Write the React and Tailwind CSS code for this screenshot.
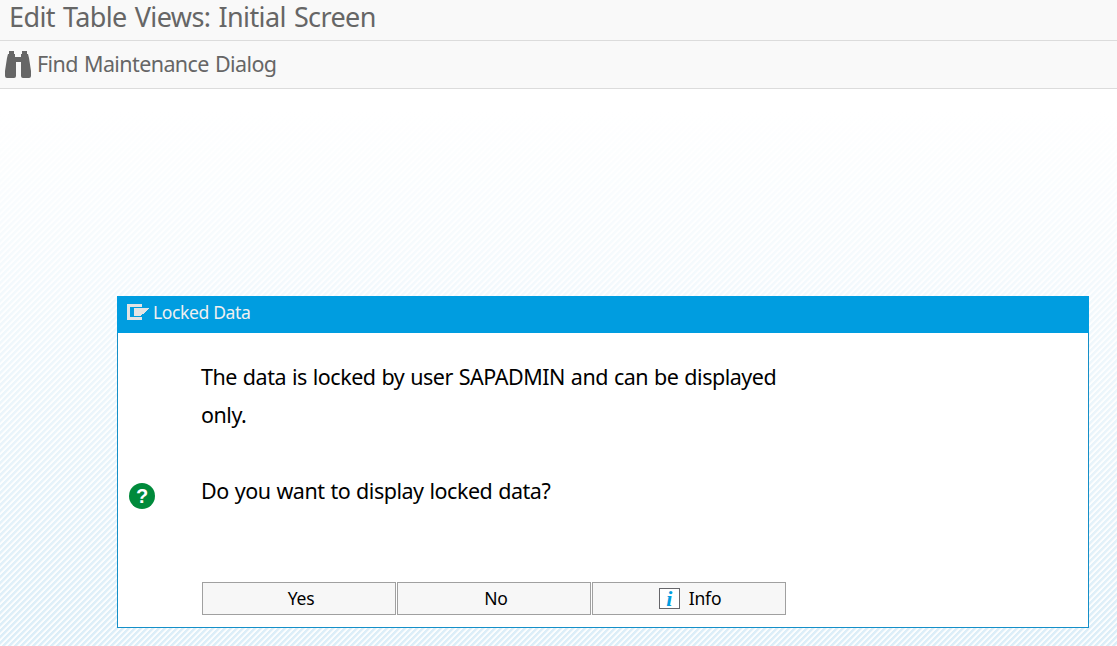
const STRIPES =
  "bg-[linear-gradient(to_bottom,#ffffff_110px,#ffffff00_640px),repeating-linear-gradient(135deg,#dceef8_0px,#dceef8_1.7px,#fbfdfe_2.4px,#fbfdfe_3.7px,#dceef8_4.2426px)]";

function BinocularsIcon() {
  return (
    <svg width="26" height="27" viewBox="0 0 26 27" fill="#666666" className="shrink-0">
      <path d="M4 0h5v3h1v3h6V3h1V0h5v3h1l1 4 2 13v5q0 2-2 2h-6q-2 0-2-2V11h-5v14q0 2-2 2H2q-2 0-2-2v-5L2 7l1-4h1z" />
    </svg>
  );
}

function DialogIcon() {
  return (
    <svg width="22" height="16" viewBox="0 0 22 16" fill="#e4e4e4" shapeRendering="crispEdges" className="shrink-0">
      <path d="M0 0h15v3H3v10h12v3H0z" />
      <path d="M7 4h15v1h-1v1h-1v1h-1v1h-1v1h-1v1h-2v1h-1v1H7z" />
    </svg>
  );
}

function QuestionIcon() {
  return (
    <div className="flex size-[26px] items-center justify-center rounded-full bg-[#008a3b] font-['Liberation_Sans'] text-[20px] leading-none font-bold text-white">
      ?
    </div>
  );
}

function InfoIcon() {
  return (
    <span className="flex h-[21px] w-[21px] items-center justify-center border border-[#66666a] bg-white font-['Liberation_Serif'] text-[22px] leading-none font-bold text-[#009de0] italic">
      i
    </span>
  );
}

function DialogButton({ children }) {
  return (
    <button
      type="button"
      className="flex h-[33px] w-[194px] items-center justify-center border border-[#a0a0a0] bg-[#f7f7f7] pl-1 text-[17.5px] leading-none tracking-[-0.2px] text-black"
    >
      {children}
    </button>
  );
}

export default function App() {
  return (
    <div className={`flex h-[646px] w-[1117px] flex-col bg-white font-['Noto_Sans',sans-serif] ${STRIPES}`}>
      <header className="flex h-[41px] shrink-0 border-b border-[#dcdcdc] bg-[#f9f9f9] pl-[9px]">
        <h1 className="text-[27px] leading-[34px] tracking-[-0.6px] [word-spacing:1.6px] whitespace-nowrap text-[#666666]">
          Edit Table Views: Initial Screen
        </h1>
      </header>

      <div className="flex h-12 shrink-0 items-center gap-[6px] border-b border-[#dcdcdc] bg-[#f9f9f9] pl-[5px]">
        <BinocularsIcon />
        <span className="pb-0.5 text-[21.5px] leading-[45px] tracking-[-0.6px] [word-spacing:1.2px] whitespace-nowrap text-[#666666]">
          Find Maintenance Dialog
        </span>
      </div>

      <section className="mt-[207px] ml-[117px] flex h-[332px] w-[972px] shrink-0 flex-col border border-[#148fc8] bg-white">
        <div className="-mx-px -mt-px flex h-[37px] shrink-0 bg-[#009de0] pt-[8px] pl-[10px]">
          <DialogIcon />
          <span className="-mt-1 ml-1 text-[17.5px] leading-[24px] tracking-[-0.36px] text-[#f0f0f0]">Locked Data</span>
        </div>

        <div className="flex h-[249px] shrink-0">
          <div className="w-[83px] pt-[150px] pl-[11px]">
            <QuestionIcon />
          </div>
          <div className="pt-[25px] text-[21.5px] leading-[38px] tracking-[-0.48px] [word-spacing:0.8px] whitespace-nowrap text-black">
            <p>The data is locked by user SAPADMIN and can be displayed</p>
            <p>only.</p>
            <p className="mt-[38px]">Do you want to display locked data?</p>
          </div>
        </div>

        <div className="ml-[84px] flex gap-px">
          <DialogButton>Yes</DialogButton>
          <DialogButton>No</DialogButton>
          <DialogButton>
            <InfoIcon />
            <span className="mr-0.5 ml-[9px]">Info</span>
          </DialogButton>
        </div>
      </section>
    </div>
  );
}
